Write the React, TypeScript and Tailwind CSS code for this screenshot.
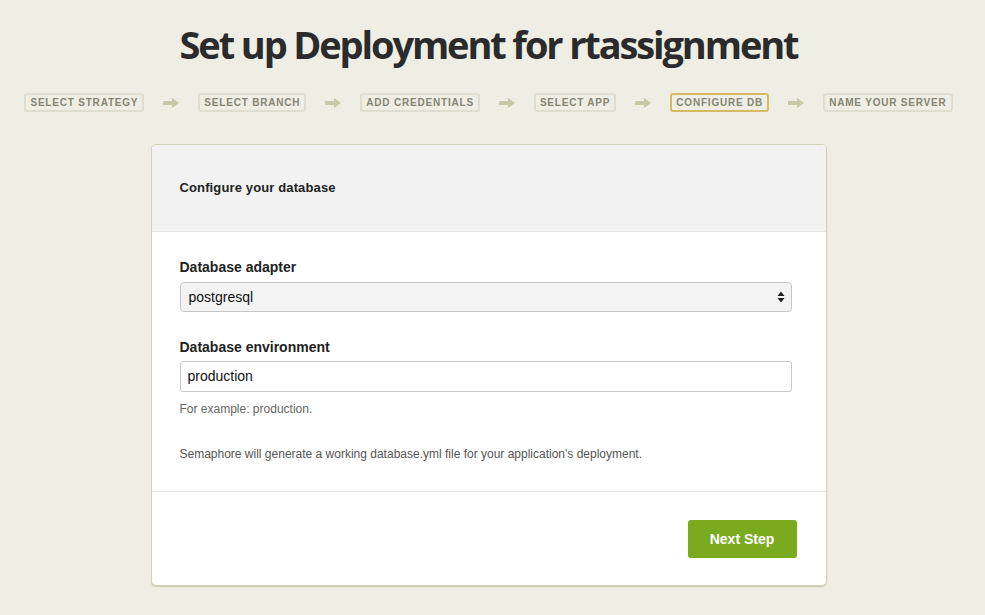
const steps = [
  { label: "Select Strategy" },
  { label: "Select Branch" },
  { label: "Add Credentials" },
  { label: "Select App" },
  { label: "Configure DB", active: true },
  { label: "Name Your Server" },
];

function StepArrow() {
  return (
    <svg width="16" height="10" viewBox="0 0 16 10" className="shrink-0">
      <rect x="0" y="3" width="10" height="4" fill="#c6c8a6" />
      <path d="M9 0 L16 5 L9 10 Z" fill="#c6c8a6" />
    </svg>
  );
}

function SelectArrows() {
  return (
    <svg width="8" height="12" viewBox="0 0 8 12">
      <path d="M4 0.5 L7.5 5 L0.5 5 Z" fill="#222" />
      <path d="M0.5 7 L7.5 7 L4 11.5 Z" fill="#222" />
    </svg>
  );
}

export default function App() {
  return (
    <div className="min-h-screen bg-[#eeeee4] font-['Liberation_Sans',Arial,sans-serif] text-[#333]">
      <div className="w-[977px] flex flex-col items-center pt-[21px] pb-10">
        <h1 className="text-[38px] leading-[46px] font-bold tracking-[-0.056em] text-[#2b2b2b] font-['Open_Sans','Liberation_Sans',sans-serif]">
          Set up Deployment for rtassignment
        </h1>

        <div className="mt-[26px] flex items-center gap-[19px]">
          {steps.map((s, i) => (
            <div key={s.label} className="flex items-center gap-[19px]">
              {i > 0 && <StepArrow />}
              <div
                className={`border-2 rounded-[3px] px-1 text-[10px] leading-[15px] font-bold uppercase tracking-[0.08em] text-[#858575] ${
                  s.active ? "border-[#d4bb63]" : "border-[#deded0]"
                }`}
              >
                {s.label}
              </div>
            </div>
          ))}
        </div>

        <div className="mt-[32px] w-[676px] bg-white border border-[#d2d2ba] rounded-[5px] shadow-[0_1px_1px_#c9c9b0] overflow-hidden">
          <div className="bg-[#f2f2f2] border-b border-[#e6e6e6] h-[87px] flex items-center px-[28px]">
            <span className="text-[13px] font-bold text-[#222] tracking-[0.01em]">Configure your database</span>
          </div>

          <div className="pl-[28px] pr-[34px] pt-[25px] pb-[29px] border-b border-[#e6e6e6]">
            <label className="block text-[14px] leading-[20px] font-bold text-[#222] mb-[5px]">
              Database adapter
            </label>
            <div className="h-[30px] bg-[#f3f3f3] border border-[#c6c6c6] rounded-[4px] flex items-center justify-between pl-[8px] pr-[6px]">
              <span className="text-[14px] text-[#111]">postgresql</span>
              <SelectArrows />
            </div>

            <label className="block mt-[25px] text-[14px] leading-[20px] font-bold text-[#222] mb-[4px]">
              Database environment
            </label>
            <div className="h-[31px] bg-white border border-[#c8c8c8] rounded-[3px] flex items-center px-[7px]">
              <span className="text-[14px] text-[#111]">production</span>
            </div>
            <p className="mt-[9px] text-[12px] leading-[16px] text-[#666]">For example: production.</p>

            <p className="mt-[29px] text-[12px] leading-[16px] text-[#555]">
              Semaphore will generate a working database.yml file for your application's deployment.
            </p>
          </div>

          <div className="flex justify-end pt-[28px] pb-[27px] pr-[29px]">
            <button className="w-[109px] h-[38px] bg-[#7aab1f] rounded-[3px] text-white text-[14px] font-bold">
              Next Step
            </button>
          </div>
        </div>
      </div>
    </div>
  );
}
